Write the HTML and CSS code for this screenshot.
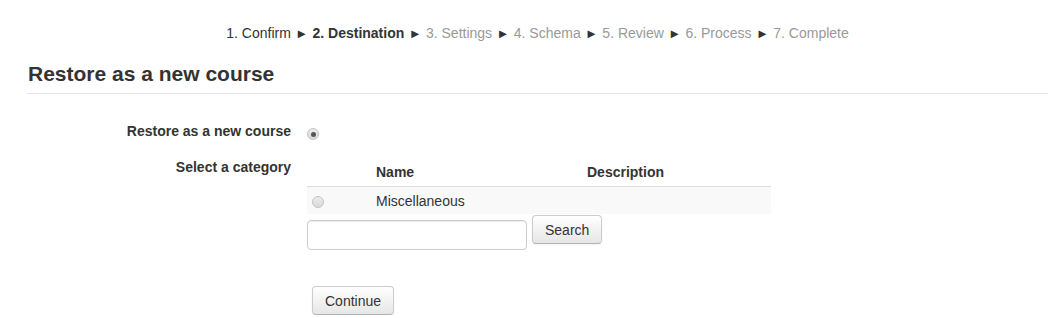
FILE: index.html
```html
<!DOCTYPE html>
<html lang="en">
  <head>
    <meta charset="UTF-8" />
    <meta name="viewport" content="width=device-width, initial-scale=1.0" />
    <title>Restore as a new course</title>
    <link rel="stylesheet" href="styles.css">
  </head>
  <body>
    <div class="page">
      <div class="steps">
        <span class="step done">1. Confirm</span>
        <span class="sep">&#9658;</span>
        <span class="step current">2. Destination</span>
        <span class="sep">&#9658;</span>
        <span class="step">3. Settings</span>
        <span class="sep">&#9658;</span>
        <span class="step">4. Schema</span>
        <span class="sep">&#9658;</span>
        <span class="step">5. Review</span>
        <span class="sep">&#9658;</span>
        <span class="step">6. Process</span>
        <span class="sep">&#9658;</span>
        <span class="step">7. Complete</span>
      </div>

      <h2 class="section-title">Restore as a new course</h2>

      <form class="restore-form">
        <div class="fitem">
          <div class="fitem-title">Restore as a new course</div>
          <div class="fitem-control">
            <input type="radio" class="radio first-radio" name="target" checked />
          </div>
        </div>

        <div class="fitem">
          <div class="fitem-title">Select a category</div>
          <div class="fitem-control">
            <table class="category-table">
              <thead>
                <tr>
                  <th class="col-select"></th>
                  <th class="col-name">Name</th>
                  <th class="col-desc">Description</th>
                </tr>
              </thead>
              <tbody>
                <tr>
                  <td class="col-select"><input type="radio" class="radio" name="category" /></td>
                  <td class="col-name">Miscellaneous</td>
                  <td class="col-desc"></td>
                </tr>
              </tbody>
            </table>
            <div class="search-row">
              <input type="text" class="search-input" />
              <button type="button" class="btn">Search</button>
            </div>
          </div>
        </div>

        <div class="actions">
          <button type="button" class="btn btn-continue">Continue</button>
        </div>
      </form>
    </div>
  </body>
</html>
```

FILE: styles.css
```css
body {
  margin: 0;
  font-family: "Liberation Sans", Arial, sans-serif;
  font-size: 14px;
  line-height: 20px;
  color: #333;
  background: #fff;
}
.page {
  padding: 0 7px 0 27px;
}
.steps {
  padding-top: 23px;
  text-align: center;
}
.step {
  color: #999;
}
.step.done {
  color: #333;
}
.step.current {
  color: #333;
  font-weight: bold;
}
.sep {
  color: #333;
  font-size: 13px;
  padding: 0 0.5px;
}
.section-title {
  margin: 18px 0 0;
  padding: 0 0 7px 1px;
  font-size: 21px;
  line-height: 24px;
  font-weight: bold;
  border-bottom: 1px solid #e5e5e5;
}
.restore-form {
  padding-top: 27px;
}
.fitem {
  display: flex;
  align-items: flex-start;
  margin-bottom: 16px;
}
.fitem-title {
  width: 264px;
  text-align: right;
  font-weight: bold;
}
.fitem-control {
  margin-left: 16px;
}
.radio {
  appearance: none;
  -webkit-appearance: none;
  display: inline-block;
  width: 12px;
  height: 12px;
  margin: 0;
  border: 1px solid #c4c4c4;
  border-radius: 50%;
  background: linear-gradient(#ececec, #d8d8d8);
  vertical-align: middle;
  position: relative;
}
.radio:checked::after {
  content: "";
  position: absolute;
  left: 3px;
  top: 3px;
  width: 5px;
  height: 5px;
  border-radius: 50%;
  background: #555;
}
.first-radio {
  margin: 3px 0 0 0;
}
.category-table {
  border-collapse: collapse;
  width: 464px;
}
.category-table th {
  text-align: left;
  padding: 5px 8px 4px;
  border-bottom: 1px solid #ddd;
}
.category-table td {
  padding: 4px 8px 3px;
  background: #f9f9f9;
}
.category-table .col-select {
  width: 48px;
  padding-left: 5px;
}
.category-table .col-name {
  width: 195px;
}
.search-row {
  display: flex;
  align-items: flex-start;
  gap: 5px;
  margin-top: 1px;
}
.search-input {
  box-sizing: border-box;
  width: 220px;
  height: 30px;
  margin-top: 5px;
  border: 1px solid #ccc;
  border-radius: 4px;
  box-shadow: inset 0 1px 1px rgba(0, 0, 0, 0.075);
}
.btn {
  box-sizing: border-box;
  height: 29px;
  padding: 0 12px;
  font-family: inherit;
  font-size: 14px;
  color: #333;
  border: 1px solid #ccc;
  border-bottom-color: #b3b3b3;
  border-radius: 4px;
  background: linear-gradient(#fff, #e6e6e6);
  box-shadow: inset 0 1px 0 rgba(255, 255, 255, 0.2), 0 1px 2px rgba(0, 0, 0, 0.05);
}
.actions {
  padding: 20px 0 0 285px;
}
```
